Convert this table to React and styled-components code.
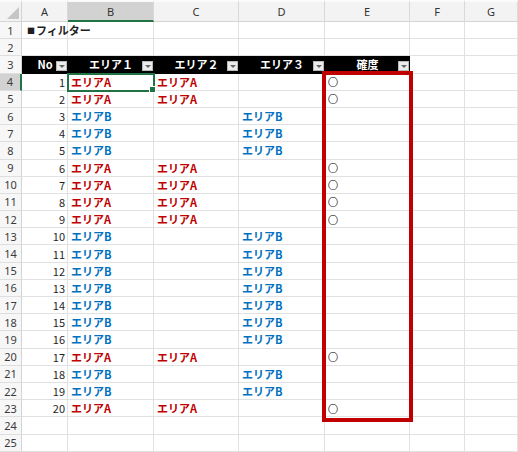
import React from 'react';
import styled, { createGlobalStyle } from 'styled-components';

const GlobalStyle = createGlobalStyle`
  body {
    margin: 0;
    background: #ffffff;
    font-family: 'Noto Sans CJK JP', 'Noto Sans', sans-serif;
  }
`;

const Wrap = styled.div`
  position: relative;
  width: 518px;
  height: 452px;
  overflow: hidden;
  background: #ffffff;
`;

const Sheet = styled.div`
  display: grid;
  grid-template-columns: 22px 46px 86px 85px 86px 85px 55px 1fr;
  grid-template-rows: 22px;
  grid-auto-rows: 17.2px;
  font-size: 11px;
`;

const Corner = styled.div`
  position: relative;
  background: #f3f3f3;
  border-top: 2px solid #fbfbfb;
  border-right: 1px solid #d4d4d4;
  border-bottom: 1px solid #d4d4d4;
  box-sizing: border-box;

  &::after {
    content: '';
    position: absolute;
    right: 2px;
    bottom: 2px;
    width: 0;
    height: 0;
    border-left: 12px solid transparent;
    border-bottom: 12px solid #c6c6c6;
  }
`;

const ColHead = styled.div`
  display: flex;
  align-items: center;
  justify-content: center;
  box-sizing: border-box;
  background: ${(p) => (p.$selected ? '#d2d2d2' : '#f3f3f3')};
  border-top: 2px solid #fbfbfb;
  border-right: 1px solid #d9d9d9;
  border-bottom: ${(p) => (p.$selected ? '2px solid #217346' : '1px solid #d4d4d4')};
  color: #333333;
  font-family: 'Noto Sans', sans-serif;
  font-size: 11px;
  line-height: 1;
`;

const RowHead = styled.div`
  display: flex;
  align-items: center;
  justify-content: center;
  box-sizing: border-box;
  background: ${(p) => (p.$selected ? '#d2d2d2' : '#f7f7f7')};
  border-right: ${(p) => (p.$selected ? '2px solid #217346' : '1px solid #d4d4d4')};
  border-bottom: 1px solid #dedede;
  color: #3a3a3a;
  font-family: 'Noto Sans', sans-serif;
  font-size: 11px;
  line-height: 1;
`;

const Cell = styled.div`
  position: relative;
  display: flex;
  align-items: center;
  justify-content: ${(p) => (p.$align === 'right' ? 'flex-end' : 'flex-start')};
  box-sizing: border-box;
  padding: 1px 2px 0 3px;
  border-right: 1px solid #e1e1e1;
  border-bottom: 1px solid #e1e1e1;
  color: ${(p) => p.$color || '#1f1f1f'};
  font-weight: ${(p) => (p.$bold ? 700 : 400)};
  font-size: 11px;
  line-height: 1;
  white-space: nowrap;
  overflow: visible;
  z-index: ${(p) => (p.$active ? 2 : 0)};
  outline: ${(p) => (p.$active ? '2px solid #217346' : 'none')};
  outline-offset: -1px;

  &::after {
    content: '';
    display: ${(p) => (p.$active ? 'block' : 'none')};
    position: absolute;
    right: -3px;
    bottom: -3px;
    width: 5px;
    height: 5px;
    background: #217346;
    border: 1px solid #ffffff;
  }
`;

const HeadCell = styled.div`
  position: relative;
  display: flex;
  align-items: center;
  justify-content: center;
  box-sizing: border-box;
  padding-top: 1px;
  background: #000000;
  border-bottom: 1px solid #000000;
  color: #ffffff;
  font-weight: 700;
  font-size: 11px;
  line-height: 1;
  white-space: nowrap;
`;

const FilterBtn = styled.span`
  position: absolute;
  right: 1px;
  bottom: 2px;
  width: 11px;
  height: 10px;
  box-sizing: border-box;
  background: #ececec;
  border: 1px solid #b8b8b8;

  &::after {
    content: '';
    position: absolute;
    left: 2px;
    top: 3px;
    border-left: 3px solid transparent;
    border-right: 3px solid transparent;
    border-top: 3px solid #666666;
  }
`;

const Square = styled.span`
  font-size: 8px;
  margin: 0 1px 0 2px;
`;

const Circle = styled.span`
  font-weight: 400;
  font-size: 10px;
  color: #111111;
  -webkit-text-stroke: 0.2px #111111;
`;

const Marker = styled.div`
  position: absolute;
  left: 322px;
  top: 71px;
  width: 91px;
  height: 351px;
  box-sizing: border-box;
  border: 4px solid #c00000;
  pointer-events: none;
`;

const RED = '#c00000';
const BLUE = '#0070c0';

const pattern = 'AABBBAAAABBBBBBBABBA'.split('');

const columns = ['A', 'B', 'C', 'D', 'E', 'F', 'G'];
const headers = ['No', 'エリア１', 'エリア２', 'エリア３', '確度'];

export default function App() {
  const rows = [];

  // row 1: title
  rows.push(
    <React.Fragment key="r1">
      <RowHead>1</RowHead>
      <Cell $bold>
        <Square>■</Square>フィルター
      </Cell>
      <Cell />
      <Cell />
      <Cell />
      <Cell />
      <Cell />
      <Cell />
    </React.Fragment>
  );

  // row 2: empty
  rows.push(
    <React.Fragment key="r2">
      <RowHead>2</RowHead>
      {columns.map((c) => (
        <Cell key={c} />
      ))}
    </React.Fragment>
  );

  // row 3: table header
  rows.push(
    <React.Fragment key="r3">
      <RowHead>3</RowHead>
      {headers.map((h) => (
        <HeadCell key={h}>
          {h}
          <FilterBtn />
        </HeadCell>
      ))}
      <Cell />
      <Cell />
    </React.Fragment>
  );

  pattern.forEach((kind, i) => {
    const r = i + 4;
    const isA = kind === 'A';
    rows.push(
      <React.Fragment key={'r' + r}>
        <RowHead $selected={r === 4}>{r}</RowHead>
        <Cell $align="right">{i + 1}</Cell>
        <Cell $bold $active={r === 4} $color={isA ? RED : BLUE}>
          {isA ? 'エリアA' : 'エリアB'}
        </Cell>
        <Cell $bold $color={RED}>{isA ? 'エリアA' : ''}</Cell>
        <Cell $bold $color={BLUE}>{isA ? '' : 'エリアB'}</Cell>
        <Cell>{isA ? <Circle>○</Circle> : null}</Cell>
        <Cell />
        <Cell />
      </React.Fragment>
    );
  });

  [24, 25].forEach((r) => {
    rows.push(
      <React.Fragment key={'r' + r}>
        <RowHead>{r}</RowHead>
        {columns.map((c) => (
          <Cell key={c} />
        ))}
      </React.Fragment>
    );
  });

  return (
    <>
      <GlobalStyle />
      <Wrap>
        <Sheet>
          <Corner />
          {columns.map((c) => (
            <ColHead key={c} $selected={c === 'B'}>
              {c}
            </ColHead>
          ))}
          {rows}
        </Sheet>
        <Marker />
      </Wrap>
    </>
  );
}
